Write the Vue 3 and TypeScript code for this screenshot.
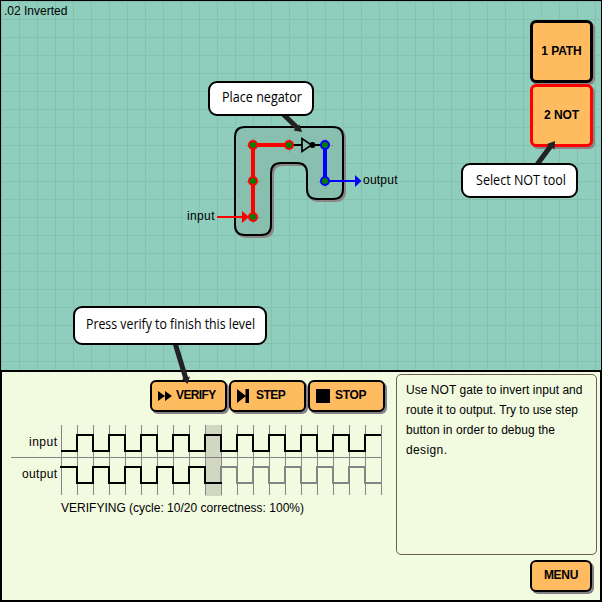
<script setup lang="ts">
interface Tool { label: string; active: boolean }
interface Point { x: number; y: number }

const tools: Tool[] = [
  { label: '1 PATH', active: false },
  { label: '2 NOT', active: true },
]

const helpLines = [
  { text: 'Use NOT gate to invert input and', width: 176.5 },
  { text: 'route it to output. Try to use step', width: 172 },
  { text: 'button in order to debug the', width: 149 },
  { text: 'design.', width: 41 },
]

const redNodes: Point[] = [{ x: 253, y: 145 }, { x: 289, y: 145 }, { x: 253, y: 181 }, { x: 253, y: 217 }]
const blueNodes: Point[] = [{ x: 325, y: 145 }, { x: 325, y: 181 }]

const step = 16
const cycles = 20
const current = 10

// Square wave from cycle `from` to cycle `to`; even cycles sit at y0, odd ones at y1.
function wave(from: number, to: number, y0: number, y1: number): string {
  let d = ''
  for (let i = from; i < to; i++) {
    const y = i % 2 === 0 ? y0 : y1
    const x = 61 + i * step
    d += `${i === from ? 'M' : 'L'}${x} ${y}L${x + step} ${y}`
  }
  return d
}

const inputWave = wave(0, cycles, 451, 435)
const outputDone = wave(0, current, 467, 483)
const outputRest = 'M221 483' + wave(current, cycles, 467, 483).replace('M', 'L')
const ticks = Array.from({ length: cycles + 1 }, (_, i) => 61.5 + i * step)

const board =
  'M245 127H333Q343 127 343 137V189Q343 199 333 199H317Q307 199 307 189V173Q307 163 297 163H281Q271 163 271 173V225Q271 235 261 235H245Q235 235 235 225V137Q235 127 245 127Z'
</script>

<template>
  <main class="game">
    <section class="field">
      <h1 class="title">.02 Inverted</h1>
      <nav class="tools">
        <button v-for="t in tools" :key="t.label" class="tool" :class="{ active: t.active }">{{ t.label }}</button>
      </nav>
    </section>

    <section class="panel">
      <div class="left">
        <div class="controls">
          <button class="btn verify">
            <svg width="14" height="10" viewBox="0 0 14 10"><path d="M0 0L7 5L0 10ZM7 0L14 5L7 10Z" /></svg>
            <span>VERIFY</span>
          </button>
          <button class="btn step">
            <svg width="13" height="14" viewBox="0 0 13 14"><path d="M0 0L9 7L0 14ZM8.500 0H12V14H8.500Z" /></svg>
            <span>STEP</span>
          </button>
          <button class="btn">
            <svg width="14" height="14" viewBox="0 0 14 14"><path d="M0 0H14V14H0Z" /></svg>
            <span>STOP</span>
          </button>
        </div>
        <svg class="chart" width="383" height="103" viewBox="2 418 383 103">
          <rect x="205" y="425" width="17" height="71" fill="#d2d7c1" />
          <path v-for="x in ticks" :key="x" :d="`M${x} 425V495`" stroke="#858585" />
          <path d="M11 457.500H382" stroke="#857f86" />
          <g fill="none" stroke-width="2">
            <path :d="outputRest" stroke="#858585" />
            <path :d="inputWave" stroke="#000" />
            <path :d="outputDone" stroke="#000" stroke-linecap="square" />
          </g>
          <text x="29" y="446" textLength="28">input</text>
          <text x="22" y="478" textLength="35">output</text>
          <text x="61" y="512" textLength="243">VERIFYING (cycle: 10/20 correctness: 100%)</text>
        </svg>
      </div>
      <aside class="side">
        <div class="help">
          <svg width="190" height="84">
            <text v-for="(l, i) in helpLines" :key="i" x="9" :y="19 + i * 20" :textLength="l.width">{{ l.text }}</text>
          </svg>
        </div>
        <button class="btn menu">MENU</button>
      </aside>
    </section>

    <svg class="circuit" width="602" height="602" viewBox="0 0 602 602">
      <path :d="board" transform="translate(2 2)" fill="#8b8585" stroke="#8b8585" stroke-width="2" />
      <path :d="board" fill="#88bfaf" stroke="#000" stroke-width="2" />
      <g stroke="#749f93">
        <path v-for="(n, i) in [...redNodes, ...blueNodes]" :key="i" :d="`M${n.x - 7} ${n.y + 0.5}h15M${n.x + 0.5} ${n.y - 7}v15`" />
      </g>
      <path d="M253 217V145H289" fill="none" stroke="#f00" stroke-width="4" />
      <path d="M325 145V181" stroke="#00f" stroke-width="4" />
      <path d="M293 145H302M312 145H321" stroke="#000" stroke-width="2" />
      <path d="M302 138.500V151.500L311.500 145Z" fill="#88bfaf" stroke="#000" stroke-width="1.700" />
      <circle cx="312.500" cy="145" r="2.900" />
      <path d="M217 217H248" stroke="#f00" stroke-width="2" />
      <path d="M242 211L249 217L242 223Z" fill="#f00" />
      <path d="M329 181H356" stroke="#00f" stroke-width="2" />
      <path d="M355 175L361.500 181L355 187Z" fill="#00f" />
      <g fill="#008000" stroke-width="2">
        <circle v-for="(n, i) in redNodes" :key="i" :cx="n.x" :cy="n.y" r="4" stroke="#f00" />
        <circle v-for="(n, i) in blueNodes" :key="i" :cx="n.x" :cy="n.y" r="4" stroke="#00f" />
      </g>
      <text x="187" y="220" textLength="27.500">input</text>
      <text x="363" y="184" textLength="34.500">output</text>

      <g stroke="#222" stroke-width="5" fill="#222">
        <path d="M282 113L297.500 128" />
        <path d="M302 132L293.500 130.500L299.500 124.500Z" stroke="none" />
        <path d="M536 166L551.500 145" />
        <path d="M555 141L554.500 149.500L547 144Z" stroke="none" />
        <path d="M175 343L186 379" />
        <path d="M187.500 384L182 379L190 376.500Z" stroke="none" />
      </g>
      <g class="bubbles">
        <rect x="209" y="82" width="104" height="33" rx="8" />
        <rect x="462" y="164" width="115" height="33" rx="8" />
        <rect x="74" y="307" width="192" height="37" rx="8" />
      </g>
      <g class="hint">
        <text x="222" y="102" textLength="80" lengthAdjust="spacingAndGlyphs">Place negator</text>
        <text x="476" y="185" textLength="90" lengthAdjust="spacingAndGlyphs">Select NOT tool</text>
        <text x="86" y="329" textLength="169" lengthAdjust="spacingAndGlyphs">Press verify to finish this level</text>
      </g>
    </svg>
  </main>
</template>

<style>
body { margin: 0; overflow: hidden; }
</style>

<style scoped>
.game {
  position: relative;
  display: flex;
  flex-direction: column;
  width: 602px;
  height: 602px;
  font: 12px/14px "Liberation Sans", Arial, sans-serif;
  color: #000;
}
.game * { box-sizing: border-box; }
svg { display: block; font: 12px "Liberation Sans", Arial, sans-serif; }
.field {
  display: flex;
  justify-content: space-between;
  height: 370px;
  border: 1px solid #000;
  border-bottom: 0;
  background-color: #8fcebc;
  background-image:
    linear-gradient(90deg, #86c1b0 1px, transparent 1px),
    linear-gradient(#86c1b0 1px, transparent 1px);
  background-size: 18px 18px;
}
.title { margin: 3px 0 0 3px; font-size: 12px; line-height: 14px; font-weight: normal; }
.tools { display: flex; flex-direction: column; gap: 1px; padding: 19px 8px 0 0; }
button { font-family: inherit; font-size: 12px; font-weight: bold; color: #000; background: #ffbb60; padding: 0; }
.tool {
  width: 63px;
  height: 63px;
  border: 3px solid #000;
  border-radius: 6px;
  box-shadow: 2px 2px 0 #8b8585;
  padding-bottom: 2px;
  letter-spacing: -0.1px;
}
.tool.active { border-color: #f00; }
.panel {
  display: flex;
  height: 232px;
  border: 2px solid #000;
  background: #f2fae0;
}
.left { width: 394px; padding-top: 8px; }
.controls { display: flex; gap: 2px; padding-left: 148px; }
.btn {
  display: flex;
  align-items: center;
  gap: 5px;
  width: 77px;
  height: 32px;
  padding: 0 0 0 6px;
  border: 2px solid #000;
  border-radius: 6px;
  box-shadow: 2px 2px 0 #858085;
  letter-spacing: -0.3px;
}
.btn span { padding-bottom: 2px; }
.verify { gap: 4px; letter-spacing: -0.6px; }
.step { gap: 6px; letter-spacing: -0.5px; }
.chart { margin-top: 6px; }
.side { display: flex; flex-direction: column; align-items: flex-end; gap: 5px; padding-top: 2px; }
.help { width: 201px; height: 181px; border: 1px solid #6b5f50; border-radius: 5px; }
.menu { width: 62px; justify-content: center; padding: 0 0 2px; margin-right: 5px; }
.circuit { position: absolute; inset: 0; pointer-events: none; }
.bubbles rect { fill: #fff; stroke: #000; stroke-width: 2px; }
.hint text { font: 14px "Open Sans", "Noto Sans", sans-serif; }
</style>
